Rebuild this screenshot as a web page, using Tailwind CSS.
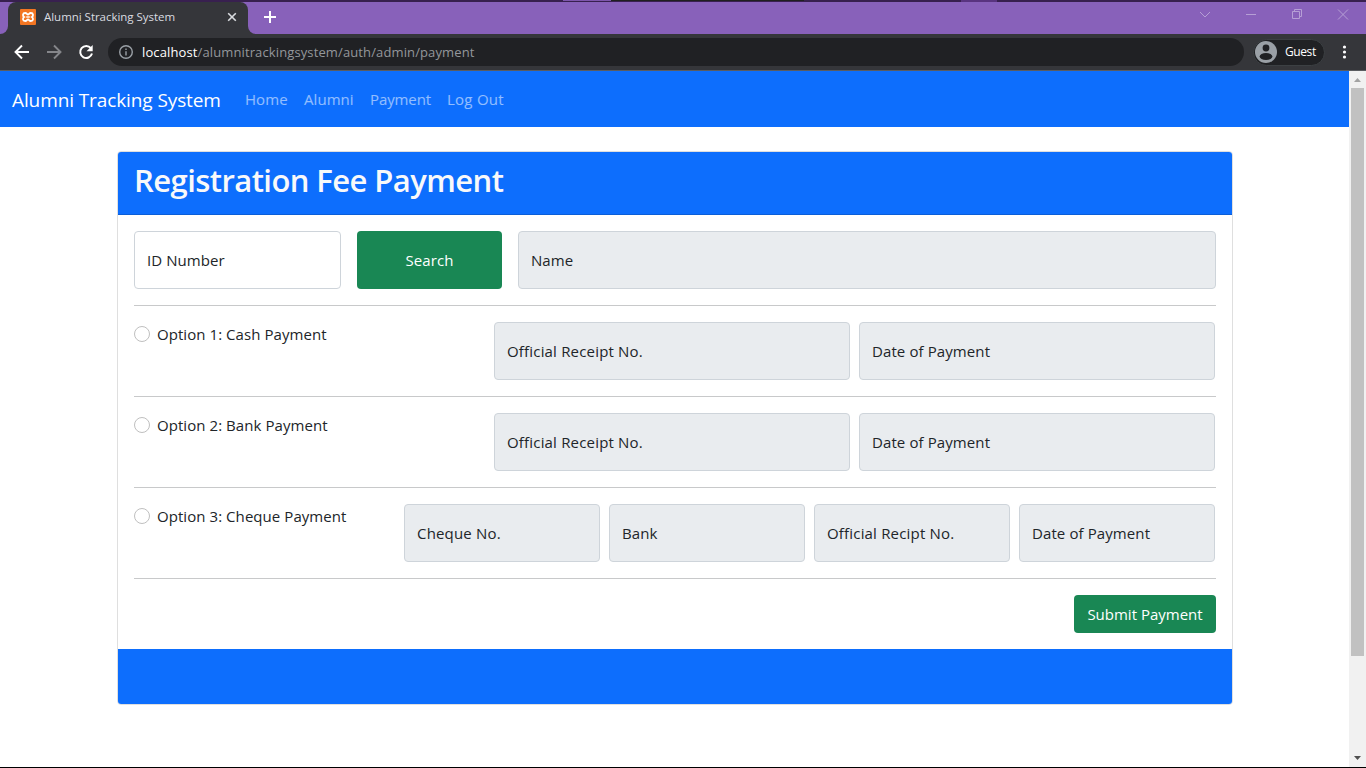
<!DOCTYPE html>
<html lang="en">
<head>
<meta charset="utf-8">
<title>Alumni Stracking System</title>
<script src="https://cdn.jsdelivr.net/npm/@tailwindcss/browser@4"></script>
</head>
<body class="flex h-screen w-screen flex-col overflow-hidden bg-white font-['Open_Sans','Noto_Sans',sans-serif] text-[15px] tracking-[0.06px] text-[#212529]">
  <!-- Desktop edge above the window -->
  <div class="flex h-[2px] shrink-0 bg-[#38204f]">
    <div class="ml-[563px] h-px w-[48px] bg-[#7e56ac]"></div>
    <div class="h-px w-[193px] bg-[#202020]"></div>
    <div class="ml-[157px] w-[36px] bg-[#593480]"></div>
  </div>
  <!-- Tab strip -->
  <header class="flex h-8 shrink-0 bg-[#8861ba]">
    <div class="flex w-2 items-end bg-[#35363a]"><div class="h-full w-full rounded-br-lg bg-[#8861ba]"></div></div>
    <div class="flex w-60 items-center rounded-t-lg bg-[#35363a] pb-[2px] pl-3">
      <svg class="size-4" viewBox="0 0 16 16"><rect width="16" height="16" rx="1" fill="#f37623"/><path d="M5.200 4C6.800 4 7 5.600 8 5.600S9.200 4 10.800 4C13.600 4 13.500 7 11.900 8c1.600 1 1.700 4-1.100 4C9.200 12 9 10.400 8 10.400S6.800 12 5.200 12C2.400 12 2.500 9 4.100 8 2.500 7 2.400 4 5.200 4Z" fill="none" stroke="#fff" stroke-width="1.800"/><path d="M6.200 8h3.600" stroke="#fff" stroke-width="1.400"/></svg>
      <span class="ml-2 w-[180px] text-[11.500px] tracking-[-0.03px] whitespace-nowrap text-[#dadce0]">Alumni Stracking System</span>
      <svg class="size-4" viewBox="0 0 16 16" stroke="#dadce0" stroke-width="1.600"><path d="m4.200 4.200 7.600 7.600m0-7.600-7.600 7.600"/></svg>
    </div>
    <div class="w-2 bg-[#35363a]"><div class="h-full rounded-bl-lg bg-[#8861ba]"></div></div>
    <svg class="mt-2 ml-1.5 h-4 w-4" viewBox="0 0 16 16" stroke="#fff" stroke-width="2"><path d="M8 1v12M2 7h12"/></svg>
    <div class="ml-auto flex h-6 items-center gap-[30px] pr-4">
      <svg class="h-4 w-4" viewBox="0 0 16 16" fill="none" stroke="#b69fd5"><path d="m4 6 5 5 5-5"/></svg>
      <svg class="h-4 w-4" viewBox="0 0 16 16" fill="none" stroke="#b69fd5"><path d="M4 8.500h10"/></svg>
      <svg class="h-4 w-4" viewBox="0 0 16 16" fill="none" stroke="#b69fd5"><path d="M4.500 5.500h7v7h-7zM6.500 5.500v-2h7v7h-2"/></svg>
      <svg class="h-4 w-4" viewBox="0 0 16 16" fill="none" stroke="#b69fd5"><path d="m4 3.500 10 10m0-10-10 10"/></svg>
    </div>
  </header>
  <!-- Toolbar -->
  <div class="flex h-9 shrink-0 items-center bg-[#35363a] pl-[14px]">
    <svg class="size-4" viewBox="0 0 16 16" fill="none" stroke="#fff" stroke-width="1.900"><path d="M15 8H2M8 1.500 1.500 8 8 14.500"/></svg>
    <svg class="ml-4 size-4" viewBox="0 0 16 16" fill="none" stroke="#85868a" stroke-width="1.900"><path d="M1 8h13M8 1.500 14.500 8 8 14.500"/></svg>
    <svg class="ml-4 size-4" viewBox="0 0 16 16"><path d="M12.900 4.200A6 6 0 1 0 14 9.600" fill="none" stroke="#fff" stroke-width="2"/><path d="M14.700 1v6.200H8.500Z" fill="#fff"/></svg>
    <div class="ml-[14px] flex h-7 w-[1136px] items-center rounded-full bg-[#202124] pl-[11px]">
      <svg class="size-[14px]" viewBox="0 0 14 14" fill="none" stroke="#9aa0a6" stroke-width="1.400"><circle cx="7" cy="7" r="6.300"/><path d="M7 6.200v4.300M7 3.500v1.500"/></svg>
      <span class="ml-[9px] pt-px text-[13px] tracking-[0.12px] whitespace-nowrap text-[#94979b]"><span class="text-white">localhost</span>/alumnitrackingsystem/auth/admin/payment</span>
    </div>
    <div class="ml-[9px] flex h-[27px] w-[72px] items-center rounded-full border border-[#3c4043] bg-[#202124] pl-px">
      <svg class="size-[22px]" viewBox="0 0 22 22"><circle cx="11" cy="11" r="11" fill="#9aa0a6"/><circle cx="11" cy="7" r="3.400" fill="#202124"/><ellipse cx="11" cy="15.500" rx="6.400" ry="3.500" fill="#202124"/></svg>
      <span class="ml-2 text-[12px] tracking-[-0.4px] text-white">Guest</span>
    </div>
    <svg class="ml-4 h-4 w-4" viewBox="0 0 16 16" fill="#fff"><circle cx="3.500" cy="3" r="1.600"/><circle cx="3.500" cy="8" r="1.600"/><circle cx="3.500" cy="13" r="1.600"/></svg>
  </div>
  <div class="h-px shrink-0 bg-[#5a5c60]"></div>
  <!-- Page -->
  <div class="flex h-[696px] shrink-0">
    <main class="flex-1">
      <nav class="flex h-14 items-center bg-[#0d6efd] pl-3 whitespace-nowrap">
        <a class="w-[233px] pt-[2px] text-[19px] tracking-[-0.1px] text-white">Alumni Tracking System</a>
        <a class="w-[59px] text-white/55">Home</a>
        <a class="w-[66px] text-white/55">Alumni</a>
        <a class="w-[77px] tracking-[-0.1px] text-white/55">Payment</a>
        <a class="tracking-[0.25px] text-white/55">Log Out</a>
      </nav>
      <section class="mt-6 ml-[117px] w-[1116px] overflow-hidden rounded border border-[#dfdfdf]">
        <h1 class="h-[63px] border-b border-[#0b5ed7] bg-[#0d6efd] px-4 pt-2 text-[31px] leading-[41px] font-semibold tracking-[-0.57px] text-[#f8f9fa]">Registration Fee Payment</h1>
        <div class="p-4">
          <div class="flex h-[58px] gap-4">
            <div class="flex w-[207px] items-center rounded border border-[#ced4da] px-3">ID Number</div>
            <div class="flex w-[145px] items-center justify-center rounded bg-[#198754] text-white">Search</div>
            <div class="flex flex-1 items-center rounded border border-[#ced4da] bg-[#e9ecef] px-3">Name</div>
          </div>
          <hr class="my-4 border-[#c8c9ca]">
          <div class="flex h-[58px] gap-[9px] pr-px">
            <div class="flex flex-1 gap-[7px]"><span class="mt-1 size-4 rounded-full border border-[#bfbfbf]"></span><span class="pt-px">Option 1: Cash Payment</span></div>
            <div class="flex w-[356px] items-center rounded border border-[#ced4da] bg-[#e9ecef] px-3 tracking-[0.18px]">Official Receipt No.</div>
            <div class="flex w-[356px] items-center rounded border border-[#ced4da] bg-[#e9ecef] px-3 tracking-[0.1px]">Date of Payment</div>
          </div>
          <hr class="my-4 border-[#c8c9ca]">
          <div class="flex h-[58px] gap-[9px] pr-px">
            <div class="flex flex-1 gap-[7px]"><span class="mt-1 size-4 rounded-full border border-[#bfbfbf]"></span><span class="pt-px">Option 2: Bank Payment</span></div>
            <div class="flex w-[356px] items-center rounded border border-[#ced4da] bg-[#e9ecef] px-3 tracking-[0.18px]">Official Receipt No.</div>
            <div class="flex w-[356px] items-center rounded border border-[#ced4da] bg-[#e9ecef] px-3 tracking-[0.1px]">Date of Payment</div>
          </div>
          <hr class="my-4 border-[#c8c9ca]">
          <div class="flex h-[58px] gap-[9px] pr-px whitespace-nowrap">
            <div class="flex flex-1 gap-[7px]"><span class="mt-1 size-4 rounded-full border border-[#bfbfbf]"></span><span class="pt-px">Option 3: Cheque Payment</span></div>
            <div class="flex w-[196px] items-center rounded border border-[#ced4da] bg-[#e9ecef] px-3 tracking-[0.18px]">Cheque No.</div>
            <div class="flex w-[196px] items-center rounded border border-[#ced4da] bg-[#e9ecef] px-3">Bank</div>
            <div class="flex w-[196px] items-center rounded border border-[#ced4da] bg-[#e9ecef] px-3 tracking-[0.18px]">Official Recipt No.</div>
            <div class="flex w-[196px] items-center rounded border border-[#ced4da] bg-[#e9ecef] px-3 tracking-[0.1px]">Date of Payment</div>
          </div>
          <hr class="my-4 border-[#c8c9ca]">
          <div class="flex justify-end"><div class="flex h-[38px] w-[142px] items-center justify-center rounded bg-[#198754] tracking-normal text-white">Submit Payment</div></div>
        </div>
        <div class="h-[55px] bg-[#0d6efd]"></div>
      </section>
    </main>
    <div class="flex w-[17px] flex-col items-center bg-[#f1f1f1]">
      <svg class="h-[17px] w-[17px]" viewBox="0 0 17 17" fill="#a3a3a3"><path d="m5 11 3.500-4 3.500 4z"/></svg>
      <div class="mb-auto h-[568px] w-[13px] bg-[#c1c1c1]"></div>
      <svg class="h-[17px] w-[17px]" viewBox="0 0 17 17" fill="#505050"><path d="m5 6 3.500 4L12 6z"/></svg>
    </div>
  </div>
  <div class="h-px shrink-0 bg-black"></div>
</body>
</html>
